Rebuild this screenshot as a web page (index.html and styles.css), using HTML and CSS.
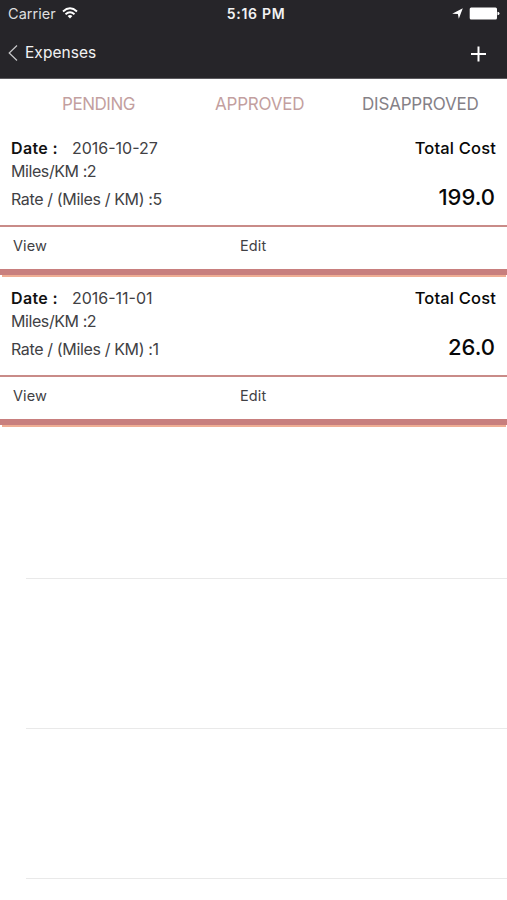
FILE: index.html
```html
<!DOCTYPE html>
<html lang="en">
<head>
<meta charset="utf-8">
<title>Expenses</title>
<link rel="stylesheet" href="styles.css">
</head>
<body>
<header class="header">
  <div class="status">
    <div class="carrier"><span>Carrier</span>
      <svg class="wifi" width="16" height="12" viewBox="0 0 16 12"><path d="M1 4.5Q8-1.8 15 4.5M3.5 7.2Q8 3.4 12.500 7.200" fill="none" stroke="#fff" stroke-width="1.900"/><path d="M5.600 9.100Q8 7 10.400 9.100L8 11.500Z" fill="#fff"/></svg>
    </div>
    <div class="clock">5:16 PM</div>
    <div class="indicators">
      <svg width="11" height="11" viewBox="0 0 11 11"><path d="M.2 5.800 10.800.2 6.800 10.800 5.900 6Z" fill="#fff"/></svg>
      <svg width="31" height="13" viewBox="0 0 31 13"><rect x=".7" y=".5" width="27.300" height="12" rx="1.500" fill="#fff"/><path d="M28.500 4.700Q30.500 5 30.500 6.500T28.500 8.300Z" fill="#fff"/></svg>
    </div>
  </div>
  <nav class="nav">
    <a class="back"><svg width="11" height="18" viewBox="0 0 11 18"><path d="M10 1.500 2.200 9 10 16.500" fill="none" stroke="#c8c8ca" stroke-width="1.200"/></svg><span>Expenses</span></a>
    <svg class="add" width="16" height="16" viewBox="0 0 16 16"><path d="M8.500 .5V15.500M1 8H16" stroke="#fff" stroke-width="2"/></svg>
  </nav>
</header>
<div class="tabs"><span class="tab pending">PENDING</span><span class="tab approved">APPROVED</span><span class="tab disapproved">DISAPPROVED</span></div>
<main>
  <article class="card">
    <div class="details">
      <div class="info"><div class="date"><b>Date :</b><span>2016-10-27</span></div><div class="miles">Miles/KM :2</div><div class="rate">Rate / (Miles / KM) :5</div></div>
      <div class="cost"><div class="label">Total Cost</div><div class="amount">199.0</div></div>
    </div>
    <div class="actions"><a>View</a><a>Edit</a></div>
    <div class="shade"></div>
  </article>
  <article class="card">
    <div class="details">
      <div class="info"><div class="date"><b>Date :</b><span>2016-11-01</span></div><div class="miles">Miles/KM :2</div><div class="rate">Rate / (Miles / KM) :1</div></div>
      <div class="cost"><div class="label">Total Cost</div><div class="amount">26.0</div></div>
    </div>
    <div class="actions"><a>View</a><a>Edit</a></div>
    <div class="shade"></div>
  </article>
  <div class="empty"></div>
  <div class="empty"></div>
  <div class="empty"></div>
</main>
</body>
</html>
```
FILE: styles.css
```css
* { box-sizing: border-box; }
body { margin: 0; height: 900px; overflow: hidden; background: #fff; color: #414144; font-family: Inter, "Liberation Sans", sans-serif; }
.header { height: 79px; background: #262529; border-bottom: 1px solid #5b5a5e; color: #f2f2f3; }
.status { height: 27px; display: grid; grid-template-columns: 1fr auto 1fr; align-items: center; padding: 0 7px 0 8px; }
.carrier { display: flex; align-items: center; gap: 6px; font-size: 14.5px; letter-spacing: .05px; color: #dededf; }
.wifi { margin-top: -1px; }
.clock { font-size: 14px; font-weight: 600; letter-spacing: .7px; margin-left: 4px; }
.indicators { display: flex; align-items: center; justify-content: flex-end; gap: 6px; }
.nav { height: 51px; display: flex; justify-content: space-between; padding: 0 21px 0 7px; }
.back { display: flex; align-items: center; gap: 7px; height: 51px; font-size: 15.5px; letter-spacing: .05px; }
.add { margin-top: 19px; }
.tabs { height: 49px; display: flex; font-size: 17px; line-height: 50px; }
.tab { flex: none; color: #c39fa0; white-space: nowrap; }
.pending { width: 153px; padding-left: 62px; letter-spacing: -.45px; }
.approved { width: 209px; padding-left: 62px; letter-spacing: -.2px; }
.disapproved { color: #858187; letter-spacing: -.2px; }
.card { height: 150.3px; }
.details { height: 99px; display: flex; justify-content: space-between; padding: 10px 11px 0; border-bottom: 2px solid #c98b88; font-size: 16px; }
.date { display: flex; gap: 14px; line-height: 21px; letter-spacing: 0; }
.date b { font-weight: 600; color: #111; letter-spacing: .35px; }
.miles { line-height: 24px; letter-spacing: -.42px; }
.rate { line-height: 32px; letter-spacing: -.36px; }
.cost { text-align: right; color: #080808; font-weight: 500; }
.label { line-height: 21px; font-size: 16.500px; letter-spacing: .17px; }
.amount { font-size: 22px; line-height: 30px; margin: 23px 1px 0 0; }
.actions { height: 48px; display: grid; grid-template-columns: 227px 1fr; padding-left: 13px; font-size: 14.500px; line-height: 37px; letter-spacing: .1px; border-bottom: 6px solid #c87f7e; }
.shade { height: 2px; margin: 0 1px 0 2px; background: #efae94; }
.empty { height: 150.300px; margin-left: 26px; border-bottom: 1px solid #e9e9e9; }
```
